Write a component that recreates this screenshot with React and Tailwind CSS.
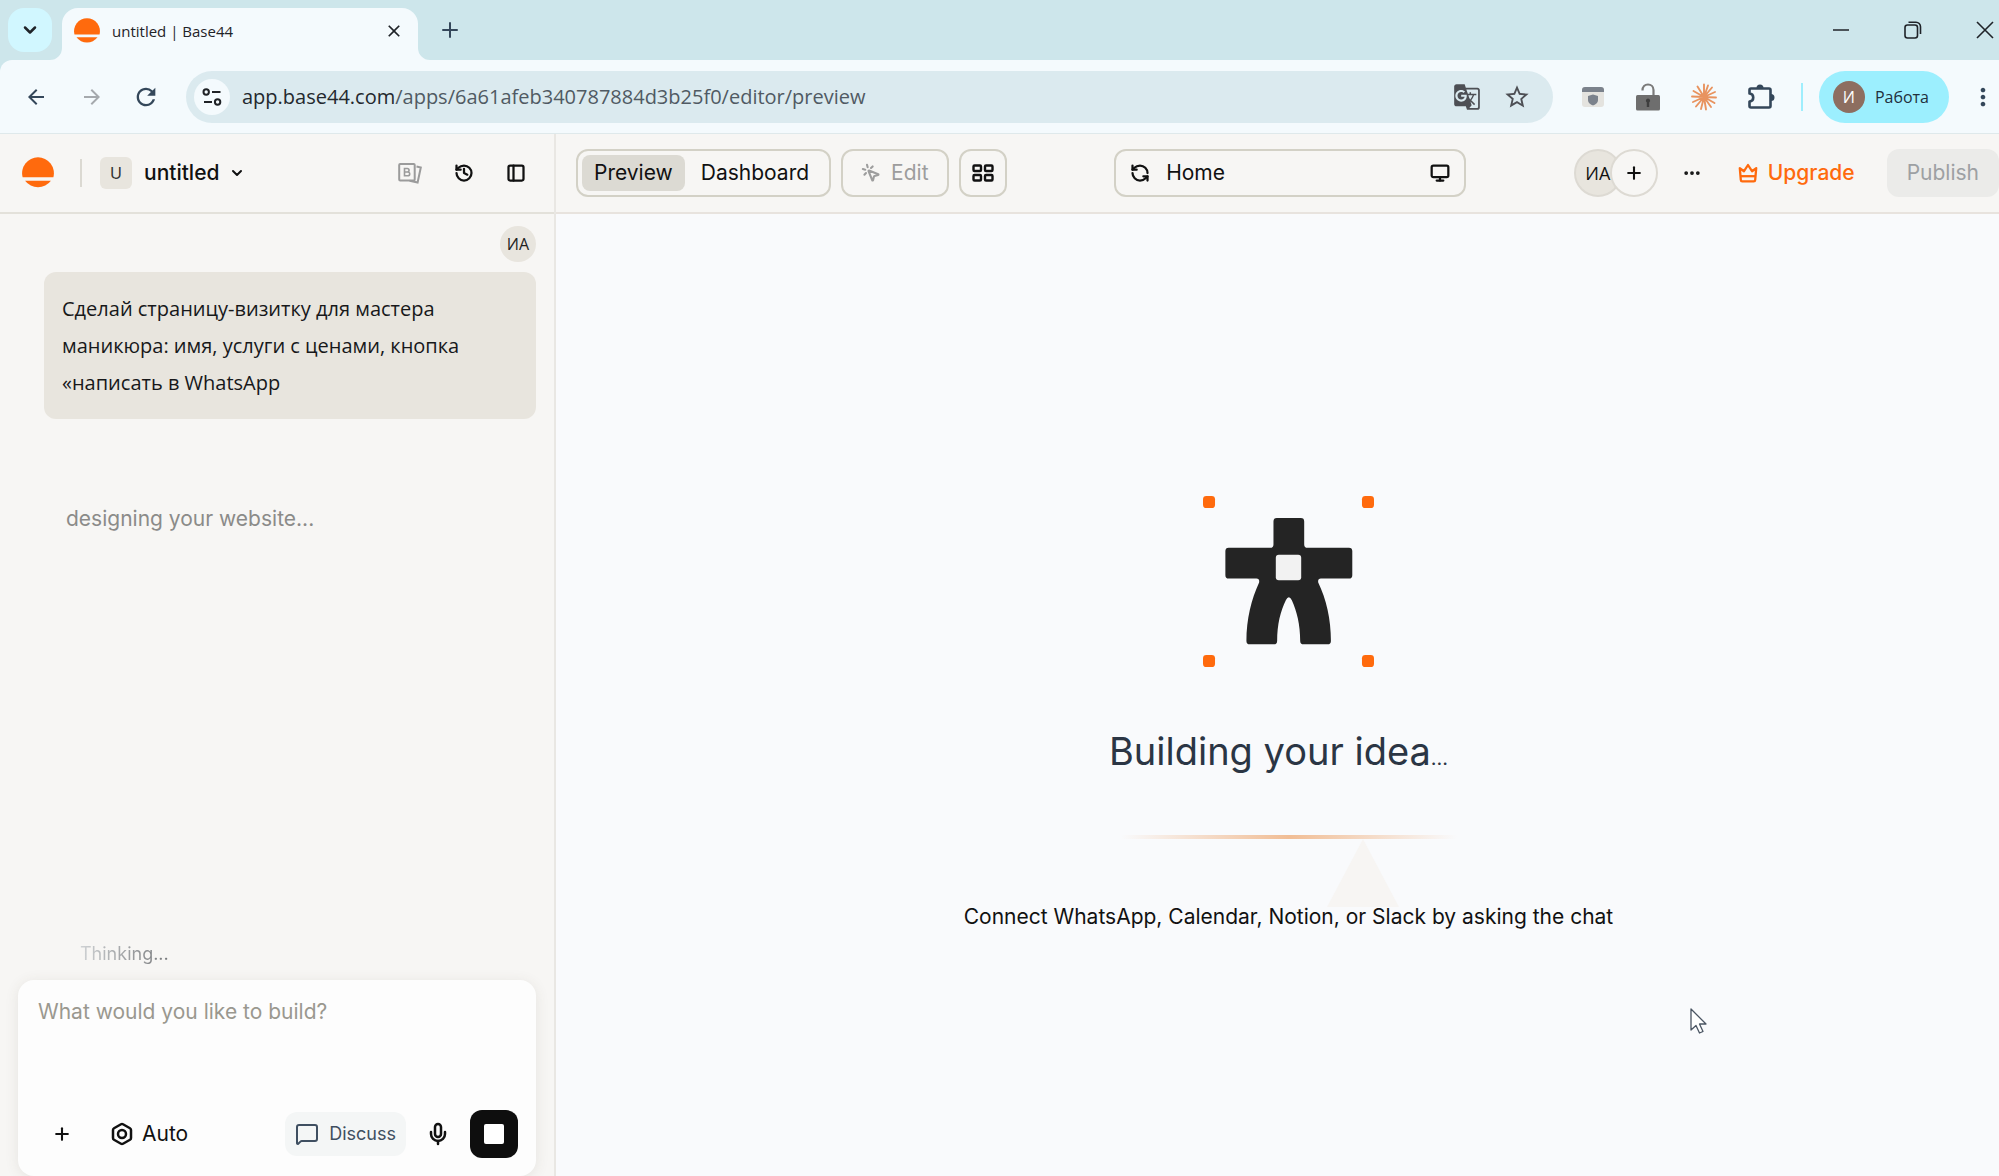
import {
  Bolt,
  ChevronDown,
  Ellipsis,
  History,
  MessageSquare,
  Mic,
  Monitor,
  MousePointerClick,
  PanelLeft,
  Plus,
  RefreshCcw,
} from 'lucide-react'
import { MdArrowBack, MdArrowForward, MdClose, MdGTranslate, MdMoreVert, MdRefresh, MdStarOutline } from 'react-icons/md'

function SunLogo({ className }) {
  return (
    <svg viewBox="0 0 31 31" className={className} aria-hidden="true">
      <path d="M0.6 19.6a15.4 15.4 0 1 1 29.8 0z" fill="#ff6a0d" />
      <path d="M3 23h25a15.5 15.5 0 0 1-25 0z" fill="#ff6a0d" />
    </svg>
  )
}

function TuneIcon() {
  return (
    <svg viewBox="0 0 20 20" className="size-5" fill="none" stroke="#1f2226" strokeWidth="2" aria-hidden="true">
      <circle cx="4.2" cy="5" r="2.7" />
      <path d="M10 5h8.5M2 15h8" />
      <circle cx="15.6" cy="15" r="2.7" />
    </svg>
  )
}

function ShieldWindowIcon() {
  return (
    <svg viewBox="0 0 24 24" className="size-6" aria-hidden="true">
      <path d="M1 5a3 3 0 0 1 3-3h16a3 3 0 0 1 3 3v14a3 3 0 0 1-3 3H4a3 3 0 0 1-3-3z" fill="#e4e3df" />
      <path d="M1 7V5a3 3 0 0 1 3-3h16a3 3 0 0 1 3 3v2z" fill="#7b828c" />
      <path d="M12 9.5l5 1.5v4c0 3-2.5 4.5-5 5.5-2.5-1-5-2.5-5-5.5v-4z" fill="#7b828c" />
    </svg>
  )
}

function OpenLockIcon() {
  return (
    <svg viewBox="0 0 26 30" className="h-7.5 w-6.5" aria-hidden="true">
      <path d="M7.5 8.5C7.5 4.5 10 2.5 13 2.5s5.5 2 5.5 5.5v6" fill="none" stroke="#7a7a7a" strokeWidth="2.2" />
      <rect x="1" y="13" width="24" height="15.5" rx="1.5" fill="#6e6e6e" />
      <path d="M13 16.5a2.2 2.2 0 0 1 1.2 4v4.5h-2.4v-4.5a2.2 2.2 0 0 1 1.2-4z" fill="#3e3e3e" />
    </svg>
  )
}

function BurstIcon() {
  return (
    <svg viewBox="0 0 26 28" className="h-7 w-6.5" stroke="#e8935f" strokeWidth="1.9" strokeLinecap="round" aria-hidden="true">
      <path d="M13 14V1.5M13 14l4-11.5M13 14l8-9.5M13 14l11-5M13 14l12 .5M13 14l10.5 6M13 14l7 10M13 14l2 12.5M13 14l-3 12M13 14l-8 9.5M13 14L2 19M13 14L1 13.5M13 14L2.5 8M13 14L6.5 3.5" />
    </svg>
  )
}

function PuzzleIcon() {
  return (
    <svg viewBox="0 0 28 28" className="size-7" aria-hidden="true">
      <path
        d="M4 5.5h18a1.5 1.5 0 0 1 1.5 1.5v16a1.5 1.5 0 0 1-1.5 1.5H4A1.5 1.5 0 0 1 2.5 23v-4.5c5-.5 5-7.5 0-8V7A1.5 1.5 0 0 1 4 5.5z"
        fill="none"
        stroke="currentColor"
        strokeWidth="2.6"
        strokeLinejoin="round"
      />
      <path d="M9.5 5a3.5 3.5 0 0 1 7 0zM24 11a3.5 3.5 0 0 1 0 7z" fill="currentColor" />
    </svg>
  )
}

function CardsIcon() {
  return (
    <svg viewBox="0 0 24 22" className="h-5.5 w-6" fill="none" stroke="#9b9b9b" strokeWidth="2" aria-hidden="true">
      <rect x="1.2" y="2" width="15.5" height="16.5" rx="1" />
      <path d="M6.5 6.5h2.8a1.7 1.7 0 0 1 0 3.5H6.5zM6.5 10h3.3a1.9 1.9 0 0 1 0 3.8H6.5z" strokeWidth="1.6" />
      <path d="M18.5 4.5l4.3 1-3.2 15-8-1.7" />
    </svg>
  )
}

function GridIcon() {
  return (
    <svg viewBox="0 0 22 18" className="h-4.5 w-5.5" fill="none" stroke="#111" strokeWidth="2.4" aria-hidden="true">
      <rect x="1.5" y="1.5" width="7.5" height="5.5" rx="1" />
      <rect x="13" y="1.5" width="7.5" height="5.5" rx="1" />
      <rect x="1.5" y="11" width="7.5" height="5.5" rx="1" />
      <rect x="13" y="11" width="7.5" height="5.5" rx="1" />
    </svg>
  )
}

function CrownIcon() {
  return (
    <svg viewBox="0 0 20 20" className="size-5" fill="none" stroke="#ff6a0d" strokeWidth="2.3" strokeLinejoin="round" aria-hidden="true">
      <path d="M1.8 5.2l1 11.6q.1 1.5 1.5 1.5h11.4q1.4 0 1.5-1.5l1-11.6-4.2 3L10 2 6 8.2z" />
      <path d="M2.5 13.2h15" />
    </svg>
  )
}

function FigureLogo() {
  return (
    <svg viewBox="0 0 512 512" className="size-[171px]" aria-hidden="true">
      <g fill="#ff6a0d">
        <rect width="36" height="36" rx="10" />
        <rect x="476" width="36" height="36" rx="10" />
        <rect y="476" width="36" height="36" rx="10" />
        <rect x="476" y="476" width="36" height="36" rx="10" />
      </g>
      <path
        d="M221 66h72q10 0 10 10v69q0 10 10 10h124q10 0 10 10v72q0 10-10 10h-84q-10 0-8 12c24 50 38 110 38 175q0 10-10 10h-72q-10 0-10-10c0-50-10-88-25-122q-9-18-18 0c-16 34-26 72-26 122q0 10-10 10h-72q-10 0-10-10c0-65 15-125 38-175q2-12-8-12H77q-10 0-10-10v-72q0-10 10-10h124q10 0 10-10V76q0-10 10-10z"
        fill="#242424"
      />
      <rect x="218" y="176" width="76" height="76" rx="9" fill="#f2f2f2" />
    </svg>
  )
}

function TabStrip() {
  return (
    <div className="flex h-15 items-end bg-[#cde6eb] text-[#1f2328]">
      <button type="button" aria-label="Search tabs" className="mb-2 ml-2 flex size-11 items-center justify-center rounded-2xl bg-[#d1f7ff]">
        <ChevronDown className="size-5" strokeWidth={3} />
      </button>
      <div className="relative ml-2.5 flex h-13 w-[356px] items-center rounded-t-2xl bg-[#f4fafd] pr-3.5 pb-1.5 pl-3">
        <svg viewBox="0 0 12 12" className="absolute bottom-0 -left-3 size-3" aria-hidden="true">
          <path d="M12 0v12H0A12 12 0 0 0 12 0z" fill="#f4fafd" />
        </svg>
        <svg viewBox="0 0 12 12" className="absolute -right-3 bottom-0 size-3" aria-hidden="true">
          <path d="M0 0v12h12A12 12 0 0 1 0 0z" fill="#f4fafd" />
        </svg>
        <SunLogo className="size-6.5" />
        <span className="ml-3 flex-1 font-['Open_Sans',sans-serif] text-[15px]">untitled | Base44</span>
        <button type="button" aria-label="Close tab">
          <MdClose className="size-5" />
        </button>
      </div>
      <button type="button" aria-label="New tab" className="mb-4.5 ml-5 text-[#34475a]">
        <Plus className="size-6" strokeWidth={2} />
      </button>
      <div className="mb-5 ml-auto flex items-center gap-13 pr-1">
        <button type="button" aria-label="Minimize" className="flex size-5 items-center justify-center">
          <svg viewBox="0 0 18 18" className="size-4.5" stroke="currentColor" strokeWidth="1.5"><path d="M1 9h16" /></svg>
        </button>
        <button type="button" aria-label="Restore" className="flex size-5 items-center justify-center">
          <svg viewBox="0 0 18 18" className="size-4.5" fill="none" stroke="currentColor" strokeWidth="1.6">
            <rect x="1" y="4" width="12.5" height="13" rx="2.5" />
            <path d="M4.5 1.2H12a4.5 4.5 0 0 1 4.5 4.5V13" />
          </svg>
        </button>
        <button type="button" aria-label="Close window" className="flex size-5 items-center justify-center">
          <svg viewBox="0 0 18 18" className="size-4.5" stroke="currentColor" strokeWidth="1.6"><path d="M1 1l16 16M17 1L1 17" /></svg>
        </button>
      </div>
    </div>
  )
}

function AddressBar() {
  return (
    <div className="flex h-[74px] items-center rounded-tl-xl border-b border-[#dfe9eb] bg-[#f4fafd] text-[#34475a]">
      <button type="button" aria-label="Back" className="ml-6"><MdArrowBack className="size-6" /></button>
      <button type="button" aria-label="Forward" className="ml-8 text-[#a5a9ad]"><MdArrowForward className="size-6" /></button>
      <button type="button" aria-label="Reload" className="ml-7"><MdRefresh className="size-7" /></button>
      <div className="ml-6.5 flex h-13 min-w-0 flex-1 items-center rounded-full bg-[#dbeaef] pr-5.5 pl-2">
        <button type="button" aria-label="Site information" className="flex size-9 shrink-0 items-center justify-center rounded-full bg-[#f4fafd]">
          <TuneIcon />
        </button>
        <p className="ml-3 flex-1 font-['Open_Sans',sans-serif] text-xl text-[#505a63]">
          <span className="text-[#23282d]">app.base44.com</span>/apps/6a61afeb340787884d3b25f0/editor/preview
        </p>
        <button type="button" aria-label="Translate" className="text-[#4d4f54]"><MdGTranslate className="size-7" /></button>
        <button type="button" aria-label="Bookmark" className="ml-5.5 text-[#4d4f54]"><MdStarOutline className="size-7" /></button>
      </div>
      <div className="ml-7 flex shrink-0 items-center gap-7.5">
        <ShieldWindowIcon />
        <OpenLockIcon />
        <BurstIcon />
        <PuzzleIcon />
      </div>
      <span className="ml-6.5 h-7 w-0.5 bg-[#9feefd]" />
      <button type="button" className="ml-4 flex h-13 items-center gap-2.5 rounded-full bg-[#9ceffe] pr-5 pl-3.5 font-['Open_Sans',sans-serif] text-base font-medium text-[#22303d]">
        <span className="flex size-8 items-center justify-center rounded-full bg-[#8d6e60] text-base text-white">И</span>
        Работа
      </button>
      <button type="button" aria-label="Menu" className="mr-0.5 ml-5"><MdMoreVert className="size-7" /></button>
    </div>
  )
}

function Sidebar() {
  return (
    <aside className="flex w-[556px] shrink-0 flex-col border-r-2 border-[#e9e7e3] bg-[#f7f6f4]">
      <header className="flex h-20 items-center border-b-2 border-[#e3e1da] pr-7 pl-5.5">
        <SunLogo className="size-8" />
        <span className="ml-6.5 h-7 w-0.5 bg-[#dbd9d2]" />
        <span className="ml-4.5 flex size-8 items-center justify-center rounded-md bg-[#e8e5de] text-base text-[#333]">U</span>
        <button type="button" className="ml-3 flex items-center gap-2.5 text-[21px] font-medium">
          untitled
          <ChevronDown className="size-4" strokeWidth={3} />
        </button>
        <div className="ml-auto flex items-center gap-8">
          <button type="button" aria-label="Brand kit"><CardsIcon /></button>
          <button type="button" aria-label="History"><History className="size-5" strokeWidth={2.7} /></button>
          <button type="button" aria-label="Toggle sidebar"><PanelLeft className="size-5" strokeWidth={2.7} /></button>
        </div>
      </header>
      <div className="flex flex-1 flex-col pr-4.5 pl-4.5">
        <span className="mt-3 flex size-9 items-center justify-center self-end rounded-full bg-[#e8e5de] font-['Open_Sans',sans-serif] text-base text-[#222]">ИА</span>
        <p className="mt-2.5 ml-6.5 rounded-xl bg-[#e8e5de] px-4.5 py-4.5 font-['Open_Sans',sans-serif] text-xl leading-[37px] text-[#17181a]">
          Сделай страницу-визитку для мастера маникюра: имя, услуги с ценами, кнопка «написать в WhatsApp
        </p>
        <p className="mt-21 ml-12 text-[21px] leading-8 text-[#8b8b89]">designing your website...</p>
        <p className="mt-auto mb-3 ml-15.5 self-start bg-linear-to-r from-[#cfd2d4] to-[#77797b] bg-clip-text text-lg text-transparent">
          Thinking...
        </p>
        <form className="rounded-2xl bg-[#fdfdfd] pt-4 pr-4.5 pb-4.5 pl-5 shadow-[0_2px_14px_rgba(80,70,50,0.10)]">
          <textarea
            aria-label="Prompt"
            placeholder="What would you like to build?"
            className="block h-24 w-full resize-none bg-transparent text-[21px] leading-8 outline-none placeholder:text-[#9a988f]"
          />
          <div className="mt-4.5 flex items-center">
            <button type="button" aria-label="Add" className="ml-3.5"><Plus className="size-5" strokeWidth={2.5} /></button>
            <button type="button" className="ml-9.5 flex items-center gap-2 text-[21px]">
              <Bolt className="size-6" strokeWidth={2.5} />
              Auto
            </button>
            <button type="button" className="ml-auto flex h-11 items-center gap-2.5 rounded-xl bg-[#f4f6f6] px-2.5 text-lg text-[#3f4f61]">
              <MessageSquare className="size-6" />
              Discuss
            </button>
            <button type="button" aria-label="Dictate" className="ml-5"><Mic className="size-6" strokeWidth={2.5} /></button>
            <button type="button" aria-label="Stop" className="ml-5 flex size-12 items-center justify-center rounded-xl bg-[#0e0e0e]">
              <span className="size-5 rounded-xs bg-white" />
            </button>
          </div>
        </form>
      </div>
    </aside>
  )
}

function EditorHeader() {
  return (
    <header className="flex h-20 items-center justify-between border-b-2 border-[#e8e3de] bg-[#f7f6f4] pl-5 text-[21px]">
      <div className="flex items-center gap-2.5">
        <div className="flex h-12 items-center rounded-xl border-2 border-[#d3d1c6] px-1">
          <button type="button" className="h-9 rounded-lg bg-[#dcdad3] px-3">Preview</button>
          <button type="button" className="h-9 px-4">Dashboard</button>
        </div>
        <button type="button" disabled className="flex h-12 items-center gap-2.5 rounded-xl border-2 border-[#d3d1c6] px-4.5 text-[#9d9d9d]">
          <MousePointerClick className="size-5" strokeWidth={2.5} />
          Edit
        </button>
        <button type="button" aria-label="Layout" className="flex size-12 items-center justify-center rounded-xl border-2 border-[#d3d1c6]">
          <GridIcon />
        </button>
      </div>
      <div className="flex h-12 w-[352px] items-center rounded-xl border-2 border-[#d3d1c6] px-3.5">
        <button type="button" aria-label="Refresh"><RefreshCcw className="size-5" strokeWidth={2.7} /></button>
        <span className="ml-4 flex-1">Home</span>
        <button type="button" aria-label="Desktop view"><Monitor className="size-5" strokeWidth={2.7} /></button>
      </div>
      <div className="flex items-center">
        <span className="flex size-12 items-center justify-center rounded-full border-2 border-[#dddad3] bg-[#e8e5de] font-['Open_Sans',sans-serif] text-lg">ИА</span>
        <button type="button" aria-label="Invite" className="relative -ml-3 flex size-12 items-center justify-center rounded-full border-2 border-[#dddad3] bg-[#f7f6f4]">
          <Plus className="size-5" strokeWidth={2.5} />
        </button>
        <button type="button" aria-label="More" className="ml-6"><Ellipsis className="size-5" strokeWidth={2.5} /></button>
        <button type="button" className="ml-9 flex items-center gap-2.5 font-medium text-[#ff6a0d]">
          <CrownIcon />
          Upgrade
        </button>
        <button type="button" disabled className="ml-8 h-12 rounded-xl bg-[#ebebe9] px-5 text-[#9da0a3]">Publish</button>
      </div>
    </header>
  )
}

function MousePointer() {
  return (
    <svg viewBox="0 0 20 28" className="absolute top-[873px] right-[290px] h-7 w-5" aria-hidden="true">
      <path d="M2 2v21l5-4.5 3.5 7.5 3.5-1.5-3.5-7.5h6.5z" fill="#fff" stroke="#4b5563" strokeWidth="1.3" strokeLinejoin="round" />
    </svg>
  )
}

export default function App() {
  return (
    <div className="flex min-h-screen flex-col bg-[#cde6eb] font-['Inter',sans-serif] text-[#111]">
      <TabStrip />
      <AddressBar />
      <div className="flex flex-1">
        <Sidebar />
        <div className="relative flex min-w-0 flex-1 flex-col bg-[#f9fafc]">
          <EditorHeader />
          <main className="flex flex-1 flex-col items-center justify-center pt-9 pl-5.5">
            <FigureLogo />
            <h1 className="mt-14 mr-5 text-[38px] leading-14 text-[#2b3544]">
              Building your idea<span className="text-xl">...</span>
            </h1>
            <div className="mt-14 h-1 w-84 bg-linear-to-r from-transparent via-[#f1bd95] to-transparent" />
            <svg viewBox="0 0 72 72" className="-mt-1 ml-37 size-18" aria-hidden="true">
              <path d="M36 4l36 68H0z" fill="#f7f5f3" />
            </svg>
            <p className="relative -mt-1 text-[21px] leading-7">Connect WhatsApp, Calendar, Notion, or Slack by asking the chat</p>
          </main>
          <MousePointer />
        </div>
      </div>
    </div>
  )
}
